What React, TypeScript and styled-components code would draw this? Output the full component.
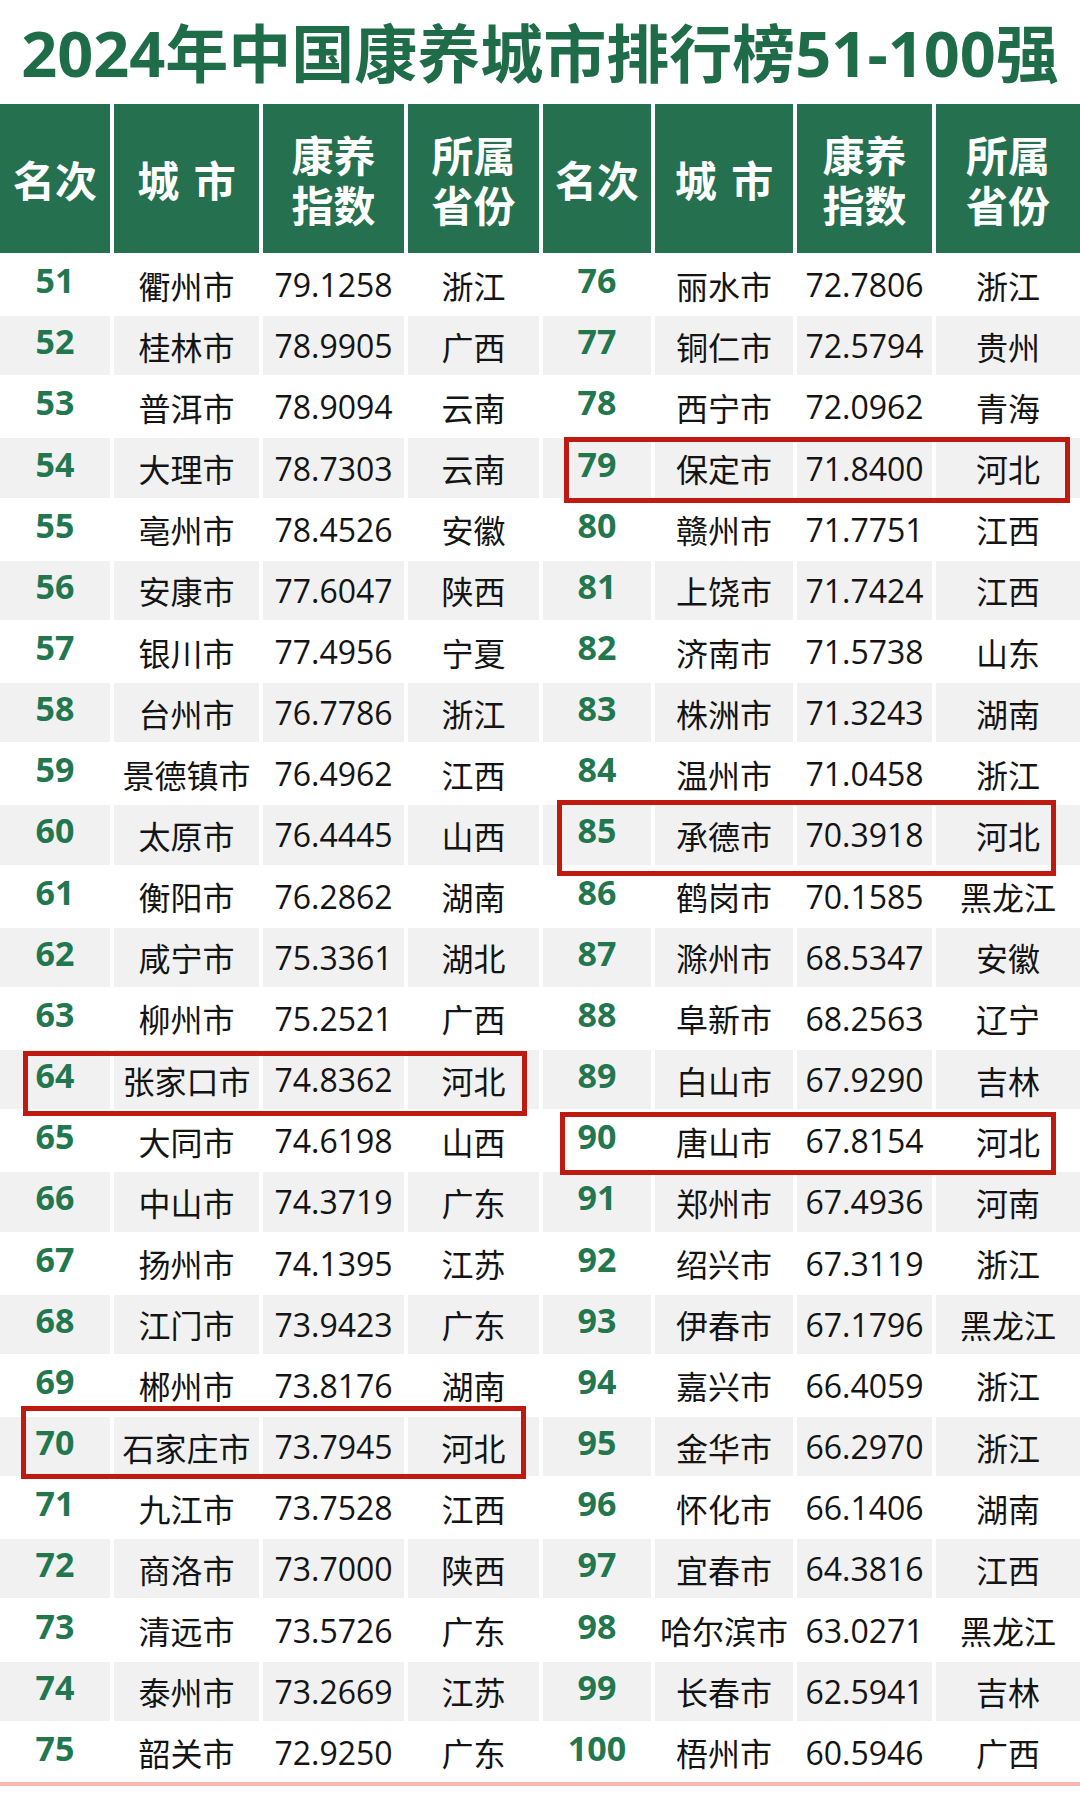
import React from "react";
import styled, { createGlobalStyle } from "styled-components";

const GlobalStyle = createGlobalStyle`
  html, body { margin: 0; padding: 0; background: #ffffff; }
  body { font-family: "Open Sans", "Noto Sans CJK SC", sans-serif; }
`;

const COLS = "110px 145px 141px 131px 108px 138px 135px 144px";

const Page = styled.div`
  width: 1080px;
  height: 1802px;
  background: #ffffff;
  overflow: hidden;
`;

const Title = styled.h1`
  margin: 0;
  height: 104px;
  display: flex;
  align-items: center;
  justify-content: center;
  font-family: "Open Sans", "Noto Sans CJK SC", sans-serif;
  font-weight: 700;
  font-size: 63px;
  line-height: 1;
  color: #1f6c49;
  white-space: nowrap;
`;

const Table = styled.div`
  display: flex;
  flex-direction: column;
  row-gap: 2px;
  border-bottom: 4px solid #f9b7b1;
`;

const Row = styled.div<{ $header?: boolean }>`
  position: relative;
  display: grid;
  grid-template-columns: ${COLS};
  column-gap: 4px;
  height: ${(p) => (p.$header ? "149px" : "59.16px")};
`;

const HeadCell = styled.div`
  background: #25704e;
  color: #ffffff;
  display: flex;
  flex-direction: column;
  align-items: center;
  justify-content: center;
  text-align: center;
  font-family: "Noto Sans CJK SC", sans-serif;
  font-weight: 700;
  font-size: 42px;
  line-height: 50px;
  word-spacing: 5px;
  white-space: nowrap;
`;

const HeadLine = styled.span`
  display: block;
  height: 50px;
  line-height: 50px;
  overflow: visible;
`;

const Cell = styled.div<{ $shade: boolean }>`
  background: ${(p) => (p.$shade ? "#f1f1f1" : "#ffffff")};
  display: flex;
  align-items: center;
  justify-content: center;
  font-family: "Open Sans", "Noto Sans CJK SC", sans-serif;
  font-size: 32px;
  color: #141414;
  white-space: nowrap;
`;

const RankCell = styled(Cell)`
  font-weight: 700;
  font-size: 34px;
  color: #23774f;
  padding-bottom: 9px;
  box-sizing: border-box;
`;

type Inset = { t: number; r: number; b: number; l: number };

const Highlight = styled.div<{ $side: "left" | "right"; $inset: Inset }>`
  position: absolute;
  z-index: 2;
  grid-row: 1;
  grid-column: ${(p) => (p.$side === "left" ? "1 / 5" : "5 / 9")};
  top: ${(p) => p.$inset.t}px;
  right: ${(p) => p.$inset.r}px;
  bottom: ${(p) => p.$inset.b}px;
  left: ${(p) => p.$inset.l}px;
  border: 5px solid #be1a10;
  pointer-events: none;
`;

type Item = [number, string, string, string];

const left: Item[] = [
  [51, "衢州市", "79.1258", "浙江"],
  [52, "桂林市", "78.9905", "广西"],
  [53, "普洱市", "78.9094", "云南"],
  [54, "大理市", "78.7303", "云南"],
  [55, "亳州市", "78.4526", "安徽"],
  [56, "安康市", "77.6047", "陕西"],
  [57, "银川市", "77.4956", "宁夏"],
  [58, "台州市", "76.7786", "浙江"],
  [59, "景德镇市", "76.4962", "江西"],
  [60, "太原市", "76.4445", "山西"],
  [61, "衡阳市", "76.2862", "湖南"],
  [62, "咸宁市", "75.3361", "湖北"],
  [63, "柳州市", "75.2521", "广西"],
  [64, "张家口市", "74.8362", "河北"],
  [65, "大同市", "74.6198", "山西"],
  [66, "中山市", "74.3719", "广东"],
  [67, "扬州市", "74.1395", "江苏"],
  [68, "江门市", "73.9423", "广东"],
  [69, "郴州市", "73.8176", "湖南"],
  [70, "石家庄市", "73.7945", "河北"],
  [71, "九江市", "73.7528", "江西"],
  [72, "商洛市", "73.7000", "陕西"],
  [73, "清远市", "73.5726", "广东"],
  [74, "泰州市", "73.2669", "江苏"],
  [75, "韶关市", "72.9250", "广东"],
];

const right: Item[] = [
  [76, "丽水市", "72.7806", "浙江"],
  [77, "铜仁市", "72.5794", "贵州"],
  [78, "西宁市", "72.0962", "青海"],
  [79, "保定市", "71.8400", "河北"],
  [80, "赣州市", "71.7751", "江西"],
  [81, "上饶市", "71.7424", "江西"],
  [82, "济南市", "71.5738", "山东"],
  [83, "株洲市", "71.3243", "湖南"],
  [84, "温州市", "71.0458", "浙江"],
  [85, "承德市", "70.3918", "河北"],
  [86, "鹤岗市", "70.1585", "黑龙江"],
  [87, "滁州市", "68.5347", "安徽"],
  [88, "阜新市", "68.2563", "辽宁"],
  [89, "白山市", "67.9290", "吉林"],
  [90, "唐山市", "67.8154", "河北"],
  [91, "郑州市", "67.4936", "河南"],
  [92, "绍兴市", "67.3119", "浙江"],
  [93, "伊春市", "67.1796", "黑龙江"],
  [94, "嘉兴市", "66.4059", "浙江"],
  [95, "金华市", "66.2970", "浙江"],
  [96, "怀化市", "66.1406", "湖南"],
  [97, "宜春市", "64.3816", "江西"],
  [98, "哈尔滨市", "63.0271", "黑龙江"],
  [99, "长春市", "62.5941", "吉林"],
  [100, "梧州市", "60.5946", "广西"],
];

const highlights: Record<number, { side: "left" | "right"; inset: Inset }[]> = {
  3: [{ side: "right", inset: { t: -1, r: 10, b: -5, l: 21 } }],
  9: [{ side: "right", inset: { t: -5, r: 24, b: -11, l: 14 } }],
  13: [{ side: "left", inset: { t: 1, r: 12, b: -7, l: 23 } }],
  14: [{ side: "right", inset: { t: 1, r: 24, b: -5, l: 17 } }],
  19: [{ side: "left", inset: { t: -11, r: 13, b: -3, l: 21 } }],
};

const Half: React.FC<{ item: Item; shade: boolean }> = ({ item, shade }) => (
  <>
    <RankCell $shade={shade}>{item[0]}</RankCell>
    <Cell $shade={shade}>{item[1]}</Cell>
    <Cell $shade={shade}>{item[2]}</Cell>
    <Cell $shade={shade}>{item[3]}</Cell>
  </>
);

const HeaderHalf: React.FC = () => (
  <>
    <HeadCell>
      <HeadLine>名次</HeadLine>
    </HeadCell>
    <HeadCell>
      <HeadLine>城 市</HeadLine>
    </HeadCell>
    <HeadCell>
      <HeadLine>康养</HeadLine>
      <HeadLine>指数</HeadLine>
    </HeadCell>
    <HeadCell>
      <HeadLine>所属</HeadLine>
      <HeadLine>省份</HeadLine>
    </HeadCell>
  </>
);

export default function App() {
  return (
    <Page>
      <GlobalStyle />
      <Title>2024年中国康养城市排行榜51-100强</Title>
      <Table>
        <Row $header>
          <HeaderHalf />
          <HeaderHalf />
        </Row>
        {left.map((l, i) => {
          const shade = i % 2 === 1;
          return (
            <Row key={l[0]}>
              <Half item={l} shade={shade} />
              <Half item={right[i]} shade={shade} />
              {(highlights[i] || []).map((h, k) => (
                <Highlight key={k} $side={h.side} $inset={h.inset} />
              ))}
            </Row>
          );
        })}
      </Table>
    </Page>
  );
}
